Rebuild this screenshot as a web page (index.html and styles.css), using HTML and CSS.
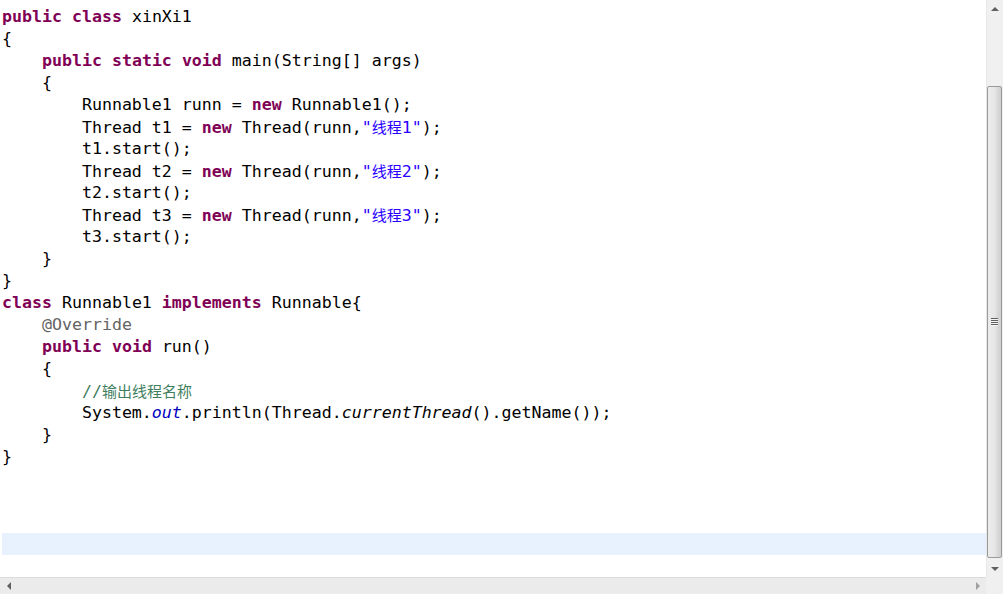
FILE: index.html
```html
<!DOCTYPE html>
<html>
<head>
<meta charset="utf-8">
<link rel="stylesheet" href="styles.css">
</head>
<body>
<div class="window">
  <div class="editor">
<div class="line"><span class="kw">public</span> <span class="kw">class</span> xinXi1</div>
<div class="line">{</div>
<div class="line">    <span class="kw">public</span> <span class="kw">static</span> <span class="kw">void</span> main(String[] args)</div>
<div class="line">    {</div>
<div class="line">        Runnable1 runn = <span class="kw">new</span> Runnable1();</div>
<div class="line">        Thread t1 = <span class="kw">new</span> Thread(runn,<span class="str">"<span class="cjk">线程</span>1"</span>);</div>
<div class="line">        t1.start();</div>
<div class="line">        Thread t2 = <span class="kw">new</span> Thread(runn,<span class="str">"<span class="cjk">线程</span>2"</span>);</div>
<div class="line">        t2.start();</div>
<div class="line">        Thread t3 = <span class="kw">new</span> Thread(runn,<span class="str">"<span class="cjk">线程</span>3"</span>);</div>
<div class="line">        t3.start();</div>
<div class="line">    }</div>
<div class="line">}</div>
<div class="line"><span class="kw">class</span> Runnable1 <span class="kw">implements</span> Runnable{</div>
<div class="line">    <span class="ann">@Override</span></div>
<div class="line">    <span class="kw">public</span> <span class="kw">void</span> run()</div>
<div class="line">    {</div>
<div class="line">        <span class="cmt">//<span class="cjk">输出线程名称</span></span></div>
<div class="line">        System.<span class="field">out</span>.println(Thread.<span class="smeth">currentThread</span>().getName());</div>
<div class="line">    }</div>
<div class="line">}</div>
<div class="line"> </div>
<div class="line"> </div>
<div class="line"> </div>
<div class="line current"> </div>
  </div>
  <div class="vscroll">
    <div class="arrow up"></div>
    <div class="vtrack">
      <div class="vthumb"><div class="grip"></div></div>
    </div>
    <div class="arrow down"></div>
  </div>
  <div class="hscroll">
    <div class="arrow left"></div>
    <div class="htrack"></div>
    <div class="arrow right"></div>
  </div>
  <div class="corner"></div>
</div>
</body>
</html>
```

FILE: styles.css
```css
html, body {
  margin: 0;
  padding: 0;
  background: #ffffff;
}

.window {
  width: 1003px;
  height: 594px;
  display: grid;
  grid-template-columns: 986px 17px;
  grid-template-rows: 577px 17px;
  overflow: hidden;
}

.editor {
  padding: 5px 0 0 2px;
  font-family: "DejaVu Sans Mono", "Liberation Mono", "Noto Sans CJK SC", monospace;
  font-size: 16.6px;
  color: #000000;
  overflow: hidden;
}

.line {
  height: 22px;
  line-height: 24px;
  white-space: pre;
}

.line.current {
  background: #e8f2fe;
}

.kw {
  color: #7f0055;
  font-weight: bold;
}

.str {
  color: #2a00ff;
}

.cmt {
  color: #3f7f5f;
}

.ann {
  color: #646464;
}

.field {
  color: #0000c0;
  font-style: italic;
}

.smeth {
  font-style: italic;
}

.cjk {
  font-family: "Noto Sans CJK SC", sans-serif;
  font-size: 15px;
}

/* vertical scrollbar */
.vscroll {
  background: #f0f0f0;
  border-left: 1px solid #e8e8e8;
  display: flex;
  flex-direction: column;
}

.arrow {
  flex: 0 0 17px;
  display: flex;
  align-items: center;
  justify-content: center;
}

.arrow::after {
  content: "";
  width: 0;
  height: 0;
}

.arrow.up::after {
  border-left: 4px solid transparent;
  border-right: 4px solid transparent;
  border-bottom: 4px solid #606060;
}

.arrow.down::after {
  border-left: 4px solid transparent;
  border-right: 4px solid transparent;
  border-top: 4px solid #606060;
}

.arrow.left::after {
  border-top: 4px solid transparent;
  border-bottom: 4px solid transparent;
  border-right: 4px solid #606060;
}

.arrow.right::after {
  border-top: 4px solid transparent;
  border-bottom: 4px solid transparent;
  border-left: 4px solid #a0a0a0;
}

.vtrack {
  flex: 1;
  padding: 69px 0 2px 0;
  display: flex;
}

.vthumb {
  flex: 1;
  margin-right: 1px;
  border: 1px solid #9a9a9a;
  border-radius: 2px;
  background: linear-gradient(to right, #ececec 0%, #e6e6e6 50%, #d6d6d6 80%, #cfcfcf 100%);
  display: flex;
  align-items: center;
  justify-content: center;
}

.grip {
  width: 7px;
  height: 8px;
  background: repeating-linear-gradient(to bottom, #606060 0px, #606060 1px, #f4f4f4 1px, #f4f4f4 2px);
  margin-left: -1px;
}

/* horizontal scrollbar */
.hscroll {
  background: #ebebeb;
  border-top: 1px solid #dcdcdc;
  display: flex;
}

.htrack {
  flex: 1;
}

.corner {
  background: #f0f0f0;
}
```
